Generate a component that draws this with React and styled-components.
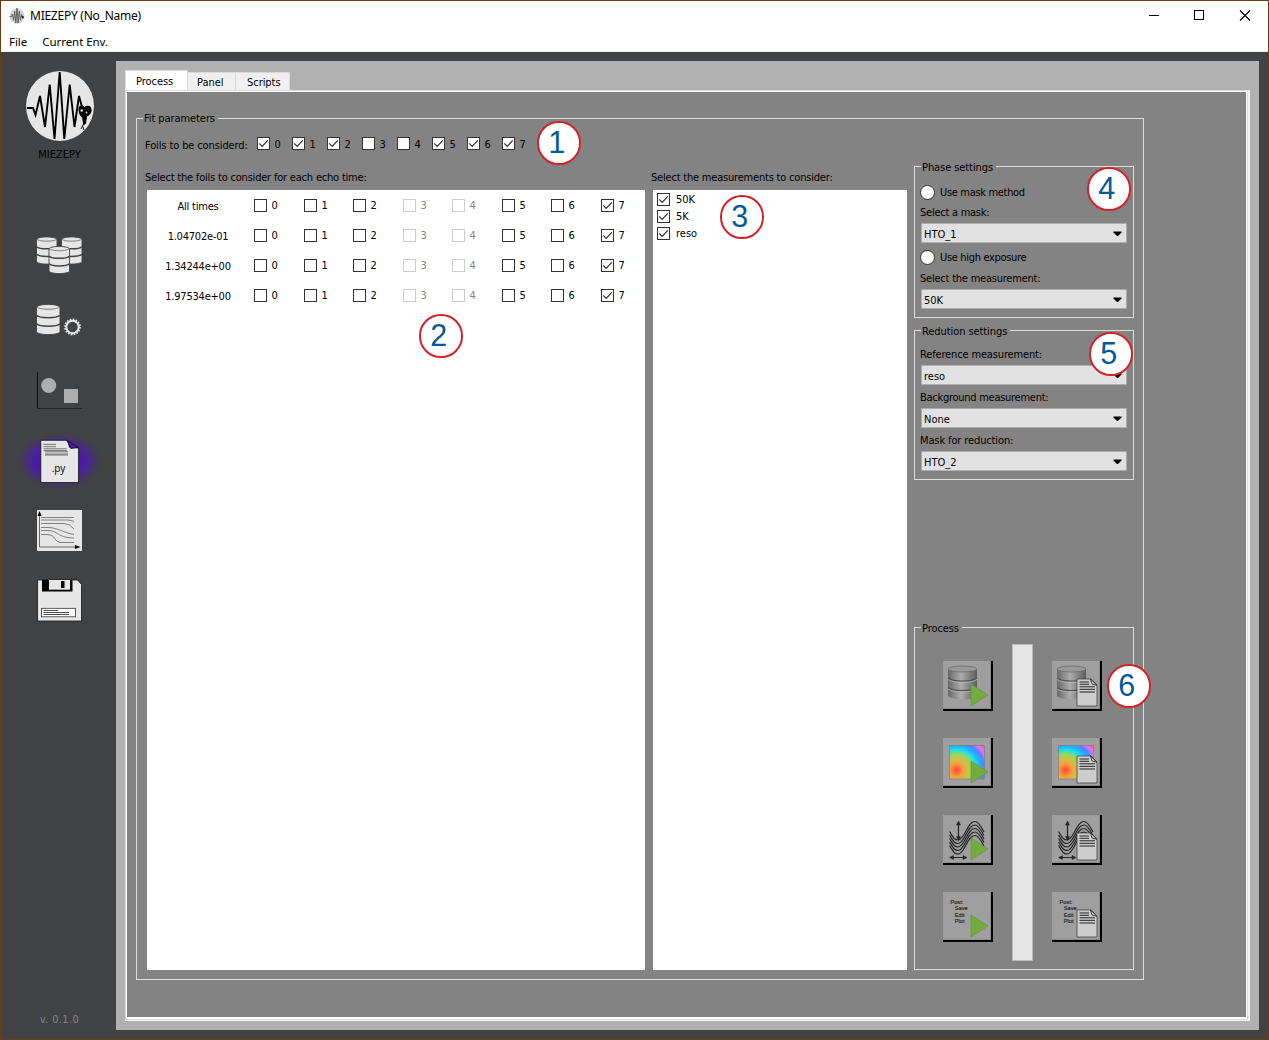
import React from "react";
import styled, { createGlobalStyle, css } from "styled-components";

const Global = createGlobalStyle`
  * { box-sizing: border-box; }
  body { margin: 0; overflow: hidden; }
`;

const ui = css`
  font-family: "DejaVu Sans Condensed", "DejaVu Sans", sans-serif;
  font-stretch: condensed;
  font-size: 11px;
  color: #000;
  white-space: nowrap;
`;

const Window = styled.div`
  ${ui}
  position: relative;
  width: 1269px;
  height: 1040px;
  border: 1px solid #6b3c12;
  background: #414243;
  display: flex;
  flex-direction: column;
`;

const TitleBar = styled.header`
  height: 29px;
  background: #fff;
  display: flex;
  align-items: center;
  padding: 0 17px 0 8px;
  font-family: "Noto Sans", sans-serif;
  font-size: 12px;
  flex: none;
`;
const Title = styled.span`
  margin-left: 5px;
  flex: 1;
  letter-spacing: -0.25px;
`;
const WindowButtons = styled.div`
  display: flex;
  gap: 34px;
`;
const MenuBar = styled.nav`
  height: 22px;
  background: #fff;
  border-bottom: 1px solid #f0f0f0;
  display: flex;
  gap: 15px;
  padding-left: 8px;
  line-height: 23px;
  font-family: "Noto Sans", sans-serif;
  font-size: 11.5px;
  letter-spacing: -0.05px;
  flex: none;
`;
const Main = styled.div`
  flex: 1;
  display: flex;
  padding: 9px 9px 9px 0;
  min-height: 0;
`;
const Sidebar = styled.aside`
  width: 115px;
  display: flex;
  flex-direction: column;
  align-items: center;
  padding: 10px 0 2px;
  svg { flex: none; display: block; }
`;
const LogoFrame = styled.div`
  padding-left: 2px;
`;
const AppName = styled.div`
  line-height: 16px;
  margin: 6px 0 53px 2px;
`;
const Version = styled.div`
  margin-top: auto;
  margin-left: 2px;
  line-height: 16px;
  letter-spacing: 0.35px;
  color: #85878a;
`;

const Workspace = styled.section`
  flex: 1;
  background: #b1b1b1;
  padding: 9px;
  display: flex;
  flex-direction: column;
`;
const Tabs = styled.div`
  display: flex;
  align-items: flex-end;
  height: 20px;
`;
const Tab = styled.div`
  width: ${(p) => p.$w}px;
  height: ${(p) => (p.$active ? 22 : 18)}px;
  margin-bottom: ${(p) => (p.$active ? -2 : 0)}px;
  background: ${(p) => (p.$active ? "#fff" : "#f0f0f0")};
  border: 1px solid #dadada;
  border-bottom: 0;
  border-left-width: ${(p) => (p.$active ? 1 : 0)}px;
  line-height: ${(p) => (p.$active ? 21 : 19)}px;
  padding-left: ${(p) => p.$pad}px;
  letter-spacing: -0.05px;
`;
const TabPage = styled.div`
  flex: 1;
  border: 1px solid #dcdcdc;
  border-right: 2px solid #f4f4f4;
  border-bottom-color: #f4f4f4;
  box-shadow: inset -1px -1px 0 #dcdcdc, inset 1px 1px 0 #fff, inset -2px -3px 0 #fff;
  background: #838383;
  padding: 27px 104px 40px 10px;
  display: flex;
`;

const Group = styled.section`
  border: 1px solid #dcdcdc;
  height: ${(p) => (p.$h ? p.$h + "px" : "auto")};
  margin-bottom: ${(p) => p.$mb || 0}px;
  margin-top: ${(p) => (p.$bottom ? "auto" : 0)};
  flex: ${(p) => (p.$grow ? "1" : "none")};
  display: flex;
  flex-direction: column;
`;
const Legend = styled.div`
  width: fit-content;
  height: 16px;
  line-height: ${(p) => (p.$inner ? 18 : 16)}px;
  margin: -8px 0 0 6px;
  padding: 0 3px 0 1px;
  background: #838383;
  letter-spacing: -0.08px;
`;

const FoilRow = styled.div`
  display: flex;
  align-items: center;
  height: 17px;
  margin: 8px 0 14px 8px;
`;
const FoilCaption = styled.span`
  width: 112px;
  padding-top: 3px;
  letter-spacing: -0.12px;
`;
const Check = styled.label`
  display: flex;
  align-items: center;
  width: ${(p) => (p.$w ? p.$w + "px" : "auto")};
  height: 17px;
  line-height: 13px;
  gap: ${(p) => p.$gap || 4.6}px;
  color: ${(p) => (p.$off ? "#838383" : "#000")};
`;
const CheckText = styled.span`
  padding-top: ${(p) => p.$drop || 0}px;
`;
const Box = styled.span`
  width: 13px;
  height: 13px;
  border: 1px solid ${(p) => (p.$off ? "#cccccc" : "#333")};
  background: #fff;
  display: flex;
  flex: none;
`;

const Body = styled.div`
  flex: 1;
  display: grid;
  grid-template-columns: 500px 256px 220px;
  column-gap: 6px;
  padding: 0 0 9px 8px;
`;
const Column = styled.div`
  display: flex;
  flex-direction: column;
  margin-left: ${(p) => p.$shift || 0}px;
  margin-right: ${(p) => -(p.$shift || 0)}px;
`;
const Caption = styled.div`
  height: 24px;
  line-height: 24px;
  letter-spacing: -0.2px;
`;
const List = styled.div`
  flex: 1;
  margin-left: 2px;
  background: #fff;
  border-top: 1px solid #828790;
  padding: ${(p) => p.$pad};
  margin-top: -1px;
`;
const TimeRow = styled.div`
  display: grid;
  grid-template-columns: 101px 50px 49px 50px 49px 50px 49px 50px 40px;
  height: 30px;
  align-items: center;
`;
const TimeLabel = styled.div`
  text-align: center;
  padding: 3px 11px 0 0;
  letter-spacing: -0.22px;
`;

const Settings = styled.div`
  padding: 0 6px;
`;
const Radio = styled.label`
  display: flex;
  align-items: center;
  gap: 5px;
  height: ${(p) => p.$h}px;
  margin-left: -1px;
  letter-spacing: -0.32px;
  &::before {
    content: "";
    width: 13px;
    height: 13px;
    border-radius: 50%;
    border: 1px solid #333;
    background: #fff;
  }
`;
const FieldLabel = styled.div`
  height: ${(p) => p.$h || 23}px;
  line-height: ${(p) => p.$lh || 25}px;
  margin-left: -1px;
  letter-spacing: ${(p) => p.$ls || -0.2}px;
`;
const Combo = styled.div`
  height: 20px;
  background: #e1e1e1;
  border: 1px solid #adadad;
  display: flex;
  align-items: center;
  justify-content: space-between;
  padding: 2px 4px 0 2px;
  svg { margin-top: -2px; }
`;

const ProcessGrid = styled.div`
  flex: 1;
  display: grid;
  grid-template-columns: 50px 21px 50px;
  column-gap: 19px;
  padding: 8px 0 8px 28px;
`;
const ButtonColumn = styled.div`
  display: flex;
  flex-direction: column;
  gap: 27px;
  padding-top: 17px;
`;
const ProcessButton = styled.button`
  width: 50px;
  height: 50px;
  padding: 0;
  background: #9f9f9f;
  border: 0 solid #9f9f9f;
  border-right: 2px solid #000;
  border-bottom: 2px solid #000;
  box-shadow: inset -1px -1px 0 #8a8a8a;
  overflow: hidden;
  svg { display: block; }
`;
const Progress = styled.div`
  background: #e6e6e6;
  border: 1px solid #bcbcbc;
`;
const Callout = styled.div`
  position: absolute;
  left: ${(p) => p.$x - 1}px;
  top: ${(p) => p.$y - 1}px;
  width: 43.5px;
  height: 43.5px;
  border-radius: 50%;
  border: 2px solid #d2232a;
  background: #fff;
  color: #005b96;
  font: 30.5px/39px "Liberation Sans", Arial, sans-serif;
  text-align: center;
  padding-right: 4px;
`;

const Tick = () => (
  <svg width="11" height="11" viewBox="0 0 11 11">
    <path d="M1.2 5.4 4.2 8.4 9.8 2.4" fill="none" stroke="#333" strokeWidth="1.3" />
  </svg>
);

const CheckItem = ({ on, off, w, gap, drop, children }) => (
  <Check $off={off} $w={w} $gap={gap}>
    <Box $off={off}>{on && <Tick />}</Box>
    <CheckText $drop={drop}>{children}</CheckText>
  </Check>
);

const Select = ({ children }) => (
  <Combo>
    {children}
    <svg width="9" height="5" viewBox="0 0 9 5">
      <path d="M0.500 0.500h8v1L5 5H4L0.500 1.500z" />
    </svg>
  </Combo>
);

const Logo = () => (
  <svg width="68" height="70" viewBox="0 0 68 70">
    <ellipse cx="34" cy="35" rx="34" ry="35" fill="#e6e6e6" />
    <path d="M1 37H7L9.500 44 14 25 19 56 23.700 13.500 28.500 68 33.700 1 38.300 68 43.700 13.500 48.500 56 53 25 56.500 38" fill="none" stroke="#000" strokeWidth="1.900" />
    <path d="M52.500 38c0-4 4-5 6-2 2-2 6.500-2 7 2 .5 4-2 6.500-4.500 7.500l-1 7-2.500 2-1.500-8c-2.500-2-3.500-5-3.500-8.500z" />
    <path d="M58 52l-3 6M56.500 55l1.500 4" stroke="#000" strokeWidth="0.900" fill="none" />
    <circle cx="55.700" cy="39.500" r="1.300" fill="#e6e6e6" />
    <circle cx="60.500" cy="41.500" r="0.900" fill="#e6e6e6" />
  </svg>
);

const MiniLogo = () => (
  <svg width="16" height="16" viewBox="0 0 68 70">
    <ellipse cx="34" cy="35" rx="33" ry="34" fill="#d8d8d8" />
    <path d="M1 38H10L14 26 19 54 24 14 29 66 34 1 39 66 44 14 49 54 54 28 60 44" fill="none" stroke="#555" strokeWidth="4" />
    <path d="M53 36h12l-5 12z" fill="#111" />
  </svg>
);

const Barrel = ({ x, y, w, h }) => {
  const r = w * 0.1;
  const s = (h - 2 * r) / 3;
  const arc = (k) => `M${x} ${y + r + s * k}c${w * 0.15} ${r * 1.4} ${w * 0.85} ${r * 1.4} ${w} 0`;
  return (
    <g stroke="#414243" strokeWidth="0.900">
      <path
        d={`M${x} ${y + r}v${s * 3}c${w * 0.15} ${r * 1.4} ${w * 0.85} ${r * 1.4} ${w} 0v${-s * 3}c${-w * 0.15} ${-r * 1.4} ${-w * 0.85} ${-r * 1.4} ${-w} 0z`}
        fill="#e6e6e6"
      />
      <path d={arc(0)} fill="none" strokeWidth="0.800" stroke="#666" />
      <path d={arc(1)} fill="none" strokeWidth="1.500" />
      <path d={arc(2)} fill="none" strokeWidth="1.500" />
    </g>
  );
};

const Nav = ({ children }) => (
  <svg width="90" height="70" viewBox="0 0 90 70">{children}</svg>
);

const DataIcon = () => (
  <Nav>
    <Barrel x={22.5} y={21} w={20.5} h={27} />
    <Barrel x={47.5} y={21} w={20.5} h={27} />
    <Barrel x={35} y={30.5} w={20.5} h={27} />
  </Nav>
);
const GearIcon = () => (
  <Nav>
    <Barrel x={22.5} y={18.5} w={23.5} h={30} />
    <circle cx="58.500" cy="41" r="7.400" fill="none" stroke="#e6e6e6" strokeWidth="2" strokeDasharray="1.600 1.306" />
    <circle cx="58.500" cy="41" r="6.200" fill="none" stroke="#e6e6e6" strokeWidth="2" />
  </Nav>
);
const ShapesIcon = () => (
  <Nav>
    <path d="M23.500 16V52.500" stroke="#0c0c0c" fill="none" />
    <path d="M23 52.500H68" stroke="#222" fill="none" />
    <circle cx="34.700" cy="29.500" r="7.500" fill="#aeaeae" />
    <rect x="50" y="33" width="14" height="14" fill="#aeaeae" />
  </Nav>
);
const ScriptIcon = () => (
  <Nav>
    <defs>
      <radialGradient id="glow">
        <stop offset="0.450" stopColor="#4b15b5" />
        <stop offset="0.700" stopColor="#49219a" stopOpacity="0.750" />
        <stop offset="1" stopColor="#414243" stopOpacity="0" />
      </radialGradient>
    </defs>
    <ellipse cx="45.500" cy="35" rx="44.500" ry="30" fill="url(#glow)" />
    <path d="M26.800 14.300H52c3 1 2.500 4 3.500 7l9 .5V56.500H26.800z" fill="#e6e6e6" stroke="#111" strokeWidth="0.800" />
    <path d="M53 14.500l11.300 7-7.500 1z" fill="#4b1ca8" stroke="#111" strokeWidth="0.800" />
    <path d="M29.500 18.400H42M29.500 20.700H42M29.500 22.800H52.500M29.500 24.600H53M31 25.800H54M31 28H54M31 29H54" stroke="#555" strokeWidth="0.800" fill="none" />
    <text x="44.500" y="46" fontSize="10" textAnchor="middle" fontFamily="Noto Sans, sans-serif" fill="#111">.py</text>
  </Nav>
);
const CurvesIcon = () => (
  <Nav>
    <rect x="23" y="14" width="45" height="41" fill="#e6e6e6" />
    <path d="M25.500 20V51H62" fill="none" stroke="#333" strokeWidth="0.700" />
    <path d="M23.500 20l2-5 2.200 5zM61 49l5.500 2-5.500 2z" />
    <path
      d="M27 21.500H60M27 24H53q4 0 7 1.500M27 27.500H50q6 0 10 5.500M27 31.500h7c9 0 15 5 26 7M27 34.500h6c12 0 9 7 27 7.500M27 38.500h6c9 0 7 8 14 8H60"
      fill="none" stroke="#555" strokeWidth="0.700"
    />
  </Nav>
);
const SaveIcon = () => (
  <Nav>
    <path d="M23.500 14H63.500L67.500 18.500V55H23.500z" fill="#e6e6e6" stroke="#111" strokeWidth="0.800" />
    <path d="M28 14H58.500V25.500H28z" />
    <path d="M35 14H56V23.700H35z" fill="#e6e6e6" />
    <path d="M47 15H50.500V22H47z" />
    <rect x="27.500" y="42.300" width="34" height="8.500" fill="#fff" stroke="#333" strokeWidth="0.800" />
    <path d="M29.500 44.500H44M29.500 46.500H55M29.500 48.500H55" stroke="#222" strokeWidth="0.800" />
  </Nav>
);

const Play = () => <path d="M28 23V45L45 34z" fill="#74aa3e" stroke="#5d8f2d" strokeWidth="0.500" />;
const Sheet = () => (
  <g>
    <path d="M25 18H39L45 24V45H25z" fill="#cdcdcd" stroke="#333" strokeWidth="0.700" />
    <path d="M38.500 18l6.300 6.200-4.800-1.200z" fill="#ddd" stroke="#111" strokeWidth="0.800" />
    <path d="M27.500 21H37M27.500 23.300H37M27.500 25.800H43M27.500 28.300H43M27.500 31H43" stroke="#222" strokeWidth="1" />
  </g>
);
const MetalBarrel = () => (
  <g>
    <defs>
      <linearGradient id="metal">
        <stop offset="0" stopColor="#686868" />
        <stop offset="0.450" stopColor="#adadad" />
        <stop offset="1" stopColor="#5c5c5c" />
      </linearGradient>
    </defs>
    <path d="M5 8V35c5 4.500 24 4.500 29 0V8z" fill="url(#metal)" />
    <ellipse cx="19.500" cy="8" rx="14.500" ry="3" fill="#999" stroke="#666" strokeWidth="0.700" />
    <path d="M5 17c5 4 24 4 29 0M5 26.500c5 4 24 4 29 0" fill="none" stroke="#505050" strokeWidth="1.200" />
    <path d="M5 18.500c5 4 24 4 29 0M5 28c5 4 24 4 29 0" fill="none" stroke="#bbb" strokeWidth="0.700" />
  </g>
);
const HeatMap = () => (
  <g>
    <defs>
      <radialGradient id="heat" gradientUnits="userSpaceOnUse" cx="13.500" cy="32" r="37">
        <stop offset="0" stopColor="#ff4a35" />
        <stop offset="0.080" stopColor="#ff6a3a" />
        <stop offset="0.180" stopColor="#f5a040" />
        <stop offset="0.300" stopColor="#d0c048" />
        <stop offset="0.440" stopColor="#8ed860" />
        <stop offset="0.540" stopColor="#20e0e8" />
        <stop offset="0.640" stopColor="#18b8ff" />
        <stop offset="0.760" stopColor="#5a80ff" />
        <stop offset="0.870" stopColor="#e078f8" />
        <stop offset="1" stopColor="#ff5080" />
      </radialGradient>
    </defs>
    <rect x="6.500" y="7.500" width="35" height="33.500" fill="url(#heat)" stroke="#777" strokeWidth="0.600" />
  </g>
);
const WavesDrawing = () => (
  <g fill="none" stroke="#222" strokeWidth="1.150">
    {[0, 3.5, 7, 10.5, 14].map((d) => (
      <path key={d} d={`M6.500 ${16.5 + d}C10 ${22 + d} 11 ${25 + d} 15 ${25 + d}C22 ${25 + d} 24 ${6.5 + d} 32 ${6.5 + d}C36 ${6.5 + d} 38 ${12 + d} 41 ${17 + d}`} />
    ))}
    <path d="M15.500 8V24M8 42.500H22" strokeWidth="1.200" />
    <path d="M13.500 10l2-4 2 4zM13.500 21.500l2 4 2-4zM10.500 40.500l-4 2 4 2zM20 40.500l4 2-4 2z" fill="#222" strokeWidth="0.500" />
  </g>
);
const PostDrawing = () => (
  <g fontFamily="Liberation Sans, Arial, sans-serif" fontSize="5.600" fill="#222" stroke="#222" strokeWidth="0.150">
    <text x="7.500" y="11.500">Post:</text>
    <text x="11.800" y="18">Save</text>
    <text x="11.800" y="24.500">Edit</text>
    <text x="11.800" y="31">Plot</text>
  </g>
);
const drawings = [MetalBarrel, HeatMap, WavesDrawing, PostDrawing];

const ProcessButtons = ({ overlay: Overlay }) => (
  <ButtonColumn>
    {drawings.map((Drawing, i) => (
      <ProcessButton key={i}>
        <svg width="48" height="48" viewBox="0 0 48 48">
          <Drawing />
          <Overlay />
        </svg>
      </ProcessButton>
    ))}
  </ButtonColumn>
);

const foils = [0, 1, 2, 3, 4, 5, 6, 7];
const steps = [50, 49, 50, 49, 50, 49, 50, 40];
const times = ["All times", "1.04702e-01", "1.34244e+00", "1.97534e+00"];
const callouts = [[537, 121], [419, 314], [720, 195], [1087, 167], [1089, 332], [1107, 664]];

export default function App() {
  return (
    <Window>
      <Global />
      <TitleBar>
        <MiniLogo />
        <Title>MIEZEPY (No_Name)</Title>
        <WindowButtons>
          <svg width="12" height="12"><path d="M2 5.500H12" stroke="#000" /></svg>
          <svg width="12" height="12"><rect x="1.500" y="0.500" width="9" height="9" fill="none" stroke="#000" /></svg>
          <svg width="12" height="12"><path d="M1 0.500L11 10.500M11 0.500L1 10.500" stroke="#000" strokeWidth="1.100" /></svg>
        </WindowButtons>
      </TitleBar>
      <MenuBar><span>File</span><span>Current Env.</span></MenuBar>
      <Main>
        <Sidebar>
          <LogoFrame><Logo /></LogoFrame>
          <AppName>MIEZEPY</AppName>
          <DataIcon />
          <GearIcon />
          <ShapesIcon />
          <ScriptIcon />
          <CurvesIcon />
          <SaveIcon />
          <Version>v. 0.1.0</Version>
        </Sidebar>
        <Workspace>
          <Tabs>
            <Tab $active $w={63} $pad={10}>Process</Tab>
            <Tab $w={48} $pad={9}>Panel</Tab>
            <Tab $w={54} $pad={11}>Scripts</Tab>
          </Tabs>
          <TabPage>
            <Group $grow>
              <Legend>Fit parameters</Legend>
              <FoilRow>
                <FoilCaption>Foils to be considerd:</FoilCaption>
                {foils.map((n) => (
                  <CheckItem key={n} w={35} drop={1} on={n !== 3 && n !== 4}>{n}</CheckItem>
                ))}
              </FoilRow>
              <Body>
                <Column>
                  <Caption>Select the foils to consider for each echo time:</Caption>
                  <List $pad="0 0 0 6px">
                    {times.map((t) => (
                      <TimeRow key={t}>
                        <TimeLabel>{t}</TimeLabel>
                        {foils.map((n) => (
                          <CheckItem key={n} w={steps[n]} drop={1} on={n === 7} off={n === 3 || n === 4}>{n}</CheckItem>
                        ))}
                      </TimeRow>
                    ))}
                  </List>
                </Column>
                <Column>
                  <Caption>Select the measurements to consider:</Caption>
                  <List $pad="1px 0 0 4px">
                    <CheckItem on gap={6}>50K</CheckItem>
                    <CheckItem on gap={6}>5K</CheckItem>
                    <CheckItem on gap={6}>reso</CheckItem>
                  </List>
                </Column>
                <Column $shift={1}>
                  <Group $h={152} $mb={12}>
                    <Legend $inner>Phase settings</Legend>
                    <Settings>
                      <Radio $h={34}>Use mask method</Radio>
                      <FieldLabel $h={14} $lh={8} $ls={-0.25}>Select a mask:</FieldLabel>
                      <Select>HTO_1</Select>
                      <Radio $h={29}>Use high exposure</Radio>
                      <FieldLabel $h={17} $lh={13} $ls={-0.22}>Select the measurement:</FieldLabel>
                      <Select>50K</Select>
                    </Settings>
                  </Group>
                  <Group $h={150}>
                    <Legend $inner>Redution settings</Legend>
                    <Settings>
                      <FieldLabel $h={26} $lh={31} $ls={-0.15}>Reference measurement:</FieldLabel>
                      <Select>reso</Select>
                      <FieldLabel $ls={-0.27}>Background measurement:</FieldLabel>
                      <Select>None</Select>
                      <FieldLabel $ls={-0.12}>Mask for reduction:</FieldLabel>
                      <Select>HTO_2</Select>
                    </Settings>
                  </Group>
                  <Group $h={343} $bottom>
                    <Legend $inner>Process</Legend>
                    <ProcessGrid>
                      <ProcessButtons overlay={Play} />
                      <Progress />
                      <ProcessButtons overlay={Sheet} />
                    </ProcessGrid>
                  </Group>
                </Column>
              </Body>
            </Group>
          </TabPage>
        </Workspace>
      </Main>
      {callouts.map(([x, y], i) => (
        <Callout key={i} $x={x} $y={y}>{i + 1}</Callout>
      ))}
    </Window>
  );
}
